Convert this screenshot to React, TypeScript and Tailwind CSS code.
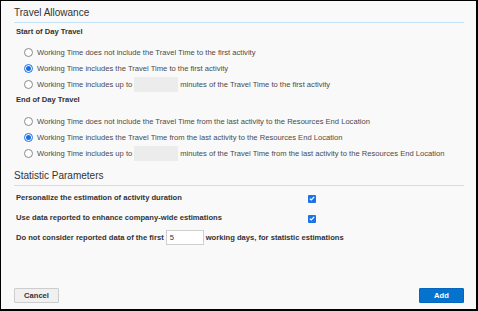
import React from "react";

const Radio = ({ checked }: { checked?: boolean }) =>
  checked ? (
    <span className="w-[9px] h-[9px] rounded-full border border-[#1a6fe0] bg-white flex items-center justify-center shrink-0">
      <span className="w-[5px] h-[5px] rounded-full bg-[#1a6fe0]" />
    </span>
  ) : (
    <span className="w-[9px] h-[9px] rounded-full border border-[#8a8a8a] bg-white shrink-0" />
  );

const Check = () => (
  <span className="w-[8px] h-[8px] rounded-[1px] bg-[#1a73e8] flex items-center justify-center">
    <svg width="6" height="5" viewBox="0 0 6 5">
      <path d="M0.8 2.6 L2.3 3.9 L5.2 0.9" stroke="white" strokeWidth="1.2" fill="none" />
    </svg>
  </span>
);

const RadioRow = ({ checked, children, h = "h-[16px]" }: { checked?: boolean; children: React.ReactNode; h?: string }) => (
  <div className={`flex items-center ${h} pl-[10px]`}>
    <Radio checked={checked} />
    <div className="ml-[4px] flex items-center text-[#4a4a4a] whitespace-pre">{children}</div>
  </div>
);

const GrayInput = () => <span className="mx-[2px] w-[44px] h-[15px] bg-[#ececec] inline-block" />;

export default function App() {
  return (
    <div className="w-[478px] h-[311px] bg-[#f9f9f9] border-black border-l border-t border-r-2 border-b-2 flex flex-col font-['Liberation_Sans',Arial,sans-serif] text-[7.6px] leading-[9px] pl-[13px] pr-[12px]">
      <div className="mt-[6px] text-[10px] leading-[12px] text-[#333]">Travel Allowance</div>
      <div className="mt-[3px] h-[1px] bg-[#c4e2f6]" />
      <div className="mt-[4px] ml-[2px] h-[9px] font-bold text-[#333]">Start of Day Travel</div>
      <div className="mt-[8px]">
        <RadioRow>Working Time does not include the Travel Time to the first activity</RadioRow>
        <RadioRow checked>Working Time includes the Travel Time to the first activity</RadioRow>
        <RadioRow h="h-[17px]">
          <span>Working Time includes up to</span>
          <GrayInput />
          <span>minutes of the Travel Time to the first activity</span>
        </RadioRow>
      </div>
      <div className="mt-[2px] ml-[2px] h-[9px] font-bold text-[#333]">End of Day Travel</div>
      <div className="mt-[9px]">
        <RadioRow>Working Time does not include the Travel Time from the last activity to the Resources End Location</RadioRow>
        <RadioRow checked>Working Time includes the Travel Time from the last activity to the Resources End Location</RadioRow>
        <RadioRow>
          <span>Working Time includes up to</span>
          <GrayInput />
          <span>minutes of the Travel Time from the last activity to the Resources End Location</span>
        </RadioRow>
      </div>
      <div className="mt-[9px] text-[10px] leading-[12px] text-[#333]">Statistic Parameters</div>
      <div className="mt-[3px] h-[1px] bg-[#c4e2f6]" />
      <div className="mt-[5px] ml-[2px] font-bold text-[#333]">
        <div className="flex items-center h-[12px]">
          <span className="w-[292px]">Personalize the estimation of activity duration</span>
          <span className="mt-[3px]"><Check /></span>
        </div>
        <div className="flex items-center h-[12px] mt-[8px]">
          <span className="w-[292px]">Use data reported to enhance company-wide estimations</span>
          <span className="mt-[3px]"><Check /></span>
        </div>
        <div className="flex items-center h-[16px] mt-[6px]">
          <span>Do not consider reported data of the first</span>
          <span className="mx-[2px] w-[38px] h-[15px] bg-white border border-[#cfcfcf] pl-[3px] flex items-center font-normal text-[#333]">5</span>
          <span>working days, for statistic estimations</span>
        </div>
      </div>
      <div className="flex-1" />
      <div className="flex justify-between mb-[6px]">
        <button className="w-[45px] h-[15px] bg-[#f0f0f0] border border-[#cdcdcd] rounded-[1px] font-bold text-[#333] text-[7.6px] leading-[9px]">Cancel</button>
        <button className="w-[45px] h-[15px] bg-[#0572ce] border border-[#0466bd] rounded-[1px] font-bold text-white text-[7.6px] leading-[9px]">Add</button>
      </div>
    </div>
  );
}
